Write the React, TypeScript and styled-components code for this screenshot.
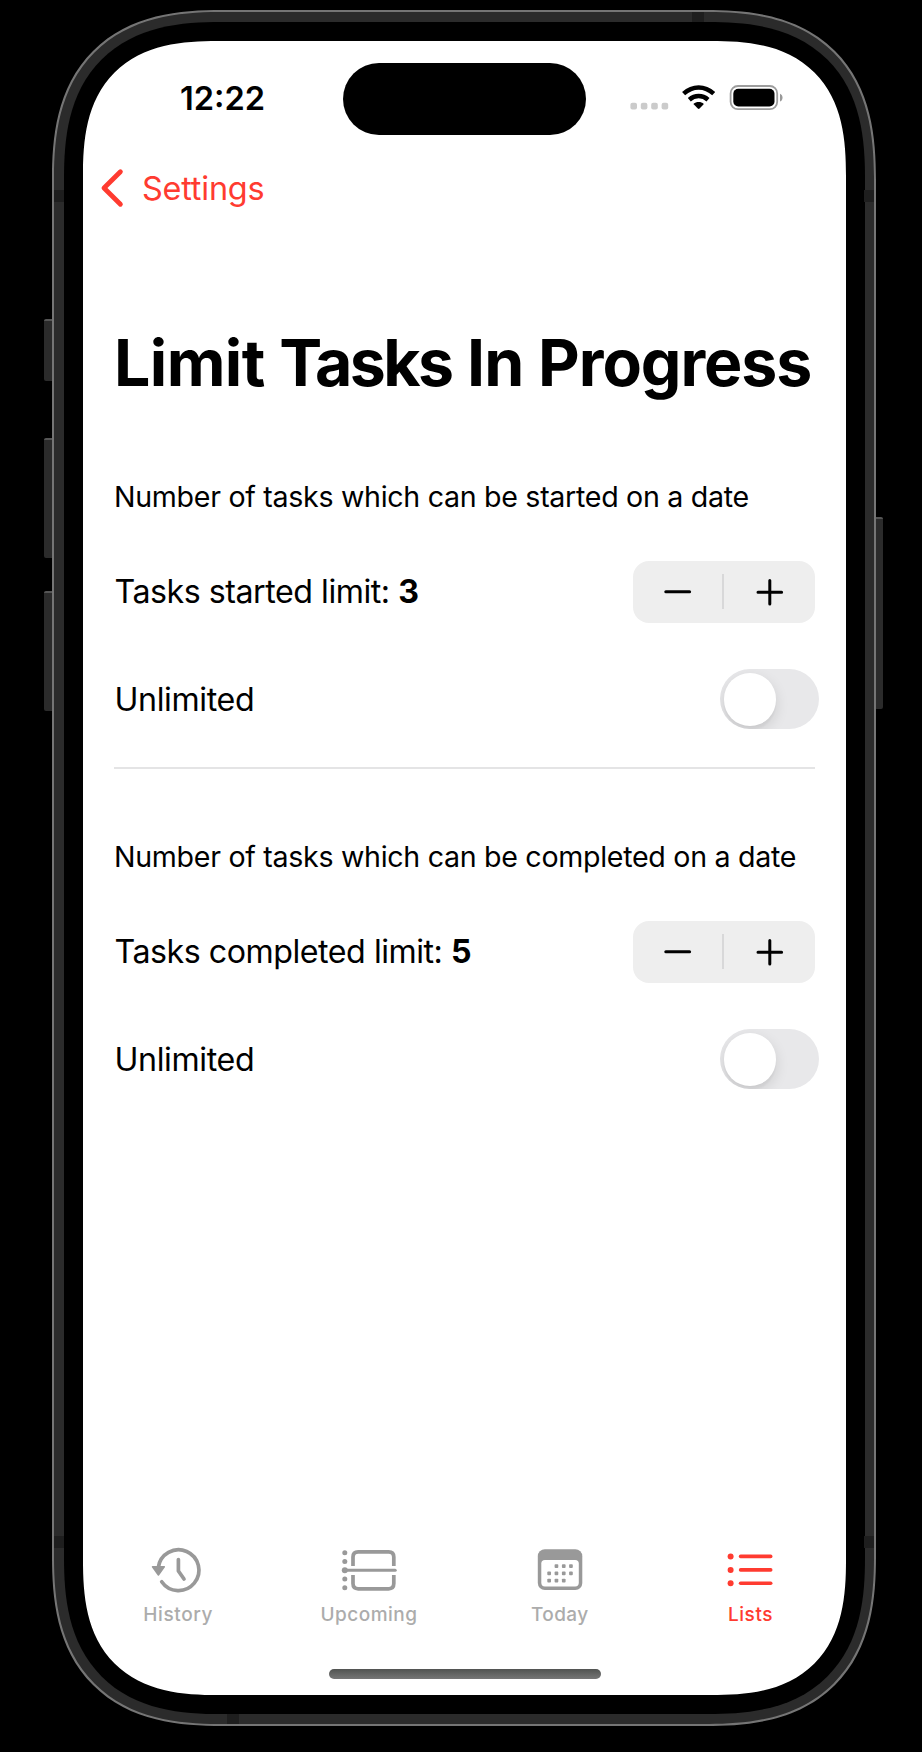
import React from 'react';
import styled, { createGlobalStyle } from 'styled-components';

const Global = createGlobalStyle`
  * { box-sizing: border-box; }
  html, body { margin: 0; background: #000; }
  body { font-family: Inter, 'Liberation Sans', sans-serif; color: #000; font-kerning: normal; }
  button { font: inherit; color: inherit; background: none; border: 0; padding: 0; }
  svg { display: block; flex: none; }
`;

const RED = '#ff3b30';

const Stage = styled.div`
  width: 922px;
  height: 1752px;
  padding: 10px 46px 0 52px;
  background: #000;
  overflow: hidden;
`;

const Frame = styled.div`
  position: relative;
  width: 824px;
  height: 1716px;
  padding: 10px 9.5px;
  background: #2b2b2b;
  border: 2px solid #757575;
  border-radius: 138px;
  @supports (corner-shape: superellipse(1.3)) {
    border-radius: 170px;
    corner-shape: superellipse(1.33);
  }
`;

const Bezel = styled.div`
  width: 100%;
  height: 100%;
  padding: 19px 18.5px 19px 19.5px;
  background: #000;
  border-radius: 126px;
  @supports (corner-shape: superellipse(1.3)) {
    border-radius: 157px;
    corner-shape: superellipse(1.34);
  }
`;

const Screen = styled.main`
  display: flex;
  flex-direction: column;
  width: 763px;
  height: 1654px;
  background: #fff;
  border-radius: 107px;
  overflow: hidden;
  @supports (corner-shape: superellipse(1.3)) {
    border-radius: 135px;
    corner-shape: superellipse(1.38);
  }
`;

const SideKey = styled.i<{ $side: 'left' | 'right'; $top: number; $h: number }>`
  position: absolute;
  ${(p) => (p.$side === 'left' ? 'left: -10px;' : 'right: -9px;')}
  top: ${(p) => p.$top}px;
  width: ${(p) => (p.$side === 'left' ? 8 : 7.5)}px;
  height: ${(p) => p.$h}px;
  background: #2b2b2b;
  border-top: 2px solid #555;
  border-radius: ${(p) => (p.$side === 'left' ? '2px 0 0 2px' : '0 2px 2px 0')};
`;

const Antenna = styled.i<{ $x: number; $y: number; $flat?: boolean }>`
  position: absolute;
  left: ${(p) => p.$x}px;
  top: ${(p) => p.$y}px;
  width: ${(p) => (p.$flat ? 11.5 : 9.5)}px;
  height: ${(p) => (p.$flat ? 10 : 11.5)}px;
  background: #1e1e1e;
`;

const StatusBar = styled.header`
  display: grid;
  grid-template-columns: 260px 243px 260px;
  height: 114px;
  padding-top: 21.5px;
`;

const Clock = styled.time`
  padding: 15.5px 0 0 97px;
  font-size: 32.6px;
  line-height: 40px;
  font-weight: 600;
  letter-spacing: 0;
`;

const Island = styled.div`
  height: 72px;
  background: #000;
  border-radius: 36px;
`;

const Indicators = styled.div`
  display: flex;
  padding: 22px 0 0 44px;
`;

const NavBar = styled.nav`
  display: flex;
  align-items: center;
  gap: 18.5px;
  height: 66px;
  padding-left: 16.5px;
  color: ${RED};
`;

const Back = styled.span`
  padding-top: 1px;
  font-size: 32.4px;
  line-height: 40px;
  letter-spacing: -0.2px;
`;

const Content = styled.section`
  flex: 1;
  padding: 0 31px;
`;

const Title = styled.h1`
  display: flex;
  margin: 102px 0 0;
  height: 81px;
  font-size: 64.4px;
  line-height: 80px;
  font-weight: 700;
  white-space: pre;
`;

const Group = styled.section`
  padding-top: 73px;
  height: 363px;
  & + & { height: 360px; border-top: 2px solid #e4e4e5; padding-top: 68px; }
`;

const Caption = styled.p`
  margin: 0;
  font-size: 28.6px;
  line-height: 40px;
  white-space: nowrap;
`;

const Row = styled.div<{ $h: number; $mt: number }>`
  display: flex;
  align-items: center;
  justify-content: space-between;
  height: ${(p) => p.$h}px;
  margin-top: ${(p) => p.$mt}px;
  font-size: 32.2px;
  line-height: 40px;
  white-space: nowrap;
`;

const Spaced = styled.span<{ $ls: number; $after?: number }>`
  letter-spacing: ${(p) => p.$ls}px;
  margin-right: ${(p) => p.$after ?? 0}px;
  b { font-weight: 700; }
`;

const RowLabel = styled(Spaced)`
  padding: 1.5px 0 0 0.5px;
`;

const StepperBox = styled.div`
  display: flex;
  align-items: center;
  width: 182.3px;
  height: 62px;
  background: #eeeeee;
  border-radius: 16px;
`;

const StepButton = styled.button`
  display: flex;
  align-items: center;
  justify-content: center;
  flex: 1;
  height: 100%;
`;

const StepDivider = styled.i`
  width: 2px;
  height: 35px;
  margin-right: 1px;
  background: #d8d8d9;
`;

const Toggle = styled.button`
  display: flex;
  width: 99px;
  height: 60px;
  margin-right: -4px;
  padding: 3.7px;
  background: #e8e8ea;
  border-radius: 30px;
  overflow: hidden;
`;

const Knob = styled.span`
  width: 52.6px;
  height: 52.6px;
  border-radius: 50%;
  background: #fff;
  box-shadow: 0 5px 14px rgba(0, 0, 0, 0.12), 0 4px 2px rgba(0, 0, 0, 0.03);
`;

const TabBar = styled.nav`
  display: grid;
  grid-template-columns: repeat(4, 190.8px);
  height: 126px;
`;

const Tab = styled.button<{ $active?: boolean; $ls: number }>`
  display: flex;
  flex-direction: column;
  align-items: center;
  height: 90px;
  padding-top: 2px;
  color: ${(p) => (p.$active ? RED : '#999')};
  svg + span {
    margin: 8px 0.5px 0 0;
    font-size: 19px;
    line-height: 24px;
    font-weight: 500;
    letter-spacing: ${(p) => p.$ls}px;
    color: ${(p) => (p.$active ? RED : '#acacac')};
  }
`;

const HomeArea = styled.footer`
  display: flex;
  justify-content: center;
  height: 26px;
`;

const HomeIndicator = styled.div`
  width: 272px;
  height: 10px;
  border-radius: 5px;
  background: linear-gradient(#515351, #767676);
`;

const Status = () => (
  <Indicators>
    <svg width="154" height="26" viewBox="630 85 154 26">
      <g fill="#cbcbcb">
        {[630.4, 640.8, 651.2, 661.6].map((x) => (
          <rect key={x} x={x} y="102.8" width="6.6" height="6.8" rx="2" />
        ))}
      </g>
      <g fill="none" stroke="#000" strokeWidth="4.5">
        <path d="M683.6 93.6C692.6 85.4 704.7 85.4 713.7 93.6" />
        <path d="M689.3 99.7C694.8 94.9 702.5 94.9 708 99.7" />
      </g>
      <path d="M693.4 103.9C696.5 101.3 700.8 101.3 703.9 103.9L699.6 108.5Q698.7 109.3 697.8 108.5Z" fill="#000" />
      <rect x="730.6" y="86" width="46.6" height="23.2" rx="7.4" fill="none" stroke="#9d9d9d" strokeWidth="1.8" />
      <rect x="733.3" y="88.7" width="41.2" height="17.8" rx="5" fill="#000" />
      <path d="M780 93.7C783.4 95 783.4 100.2 780 101.5Z" fill="#999" />
    </svg>
  </Indicators>
);

const Stepper = () => (
  <StepperBox>
    <StepButton aria-label="Decrease">
      <svg width="28" height="28" viewBox="0 0 28 28" stroke="#000" strokeWidth="3" strokeLinecap="round">
        <path d="M1.8 13.8H25.6" />
      </svg>
    </StepButton>
    <StepDivider />
    <StepButton aria-label="Increase">
      <svg width="28" height="28" viewBox="0 0 28 28" stroke="#000" strokeWidth="3" strokeLinecap="round">
        <path d="M2 14.2H25.6M13.8 2.4V26" />
      </svg>
    </StepButton>
  </StepperBox>
);

const HistoryIcon = () => (
  <svg width="54" height="50" viewBox="150.5 1545 54 50">
    <g fill="none" stroke="#999" strokeWidth="3.7" strokeLinecap="round" strokeLinejoin="round">
      <path d="M157.8 1567.5A20.4 20.4 0 1 1 161.2 1581.7" />
      <path d="M177.9 1559.5V1571L183.5 1579" />
    </g>
    <path d="M152 1566.8H163.8L157.9 1575Z" fill="#999" stroke="#999" strokeWidth="1.5" strokeLinejoin="round" />
  </svg>
);

const UpcomingIcon = () => (
  <svg width="56" height="50" viewBox="341 1545 56 50">
    <g fill="#999">
      {[1552.8, 1561.5, 1579, 1587.8].map((y) => (
        <circle key={y} cx="344.8" cy={y} r="2.5" />
      ))}
      <circle cx="344.8" cy="1570.3" r="3" />
    </g>
    <g fill="none" stroke="#999" strokeWidth="3.7">
      <path d="M344.8 1570.3H395.2" strokeWidth="3" strokeLinecap="round" />
      <path d="M353 1566V1557Q353 1551.8 358.2 1551.8H388.6Q393.8 1551.8 393.8 1557V1566" />
      <path d="M353 1575V1583.6Q353 1588.8 358.2 1588.8H388.6Q393.8 1588.8 393.8 1583.6V1575" />
    </g>
  </svg>
);

const calendarDots: [number, number][] = [
  [556.6, 1566], [563.9, 1566], [571.1, 1566],
  [549.3, 1573.3], [556.6, 1573.3], [563.9, 1573.3], [571.1, 1573.3],
  [549.3, 1580.5], [556.6, 1580.5], [563.9, 1580.5],
];

const TodayIcon = () => (
  <svg width="46" height="50" viewBox="537.2 1545 46 50">
    <rect x="538" y="1549.3" width="44.5" height="40.7" rx="7" fill="#999" />
    <rect x="541.5" y="1560" width="37.5" height="26.4" rx="3.6" fill="#fff" />
    <g fill="#999">
      {calendarDots.map(([x, y]) => (
        <rect key={`${x}-${y}`} x={x - 1.8} y={y - 1.8} width="3.7" height="3.7" rx="0.9" />
      ))}
    </g>
  </svg>
);

const ListsIcon = () => (
  <svg width="50" height="50" viewBox="726 1545 50 50">
    {[1556.4, 1569.9, 1583.3].map((y) => (
      <g key={y}>
        <circle cx="730.6" cy={y} r="3" fill={RED} />
        <path d={`M740.6 ${y}H770.7`} stroke={RED} strokeWidth="3.6" strokeLinecap="round" />
      </g>
    ))}
  </svg>
);

type LimitProps = { caption: string; label: string; value: number };

const LimitGroup = ({ caption, label, value }: LimitProps) => (
  <Group>
    <Caption><Spaced $ls={-0.3}>{caption}</Spaced></Caption>
    <Row $h={62} $mt={43.5}>
      <RowLabel $ls={-0.48}>{label} <b>{value}</b></RowLabel>
      <Stepper />
    </Row>
    <Row $h={60} $mt={46.8}>
      <RowLabel $ls={-0.38}>Unlimited</RowLabel>
      <Toggle role="switch" aria-checked={false} aria-label="Unlimited"><Knob /></Toggle>
    </Row>
  </Group>
);

export default function App() {
  return (
    <>
      <Global />
      <Stage>
        <Frame>
          <SideKey $side="left" $top={307} $h={62} />
          <SideKey $side="left" $top={426} $h={120} />
          <SideKey $side="left" $top={579} $h={120} />
          <SideKey $side="right" $top={505} $h={192} />
          <Antenna $x={0} $y={178} />
          <Antenna $x={810.4} $y={178} />
          <Antenna $x={0} $y={1524} />
          <Antenna $x={810.4} $y={1524} />
          <Antenna $x={638} $y={0} $flat />
          <Antenna $x={173} $y={1702} $flat />
          <Bezel>
            <Screen>
              <StatusBar>
                <Clock>12:22</Clock>
                <Island />
                <Status />
              </StatusBar>
              <NavBar>
                <svg width="24" height="40" viewBox="0 0 24 40" fill="none" stroke={RED} strokeWidth="4.8" strokeLinecap="round" strokeLinejoin="round">
                  <path d="M20.4 3.8L4 20L20.4 36.2" />
                </svg>
                <Back>Settings</Back>
              </NavBar>
              <Content>
                <Title>
                  <Spaced $ls={-0.6}>Limit </Spaced>
                  <Spaced $ls={-2.6} $after={3}>Tasks </Spaced>
                  <Spaced $ls={-0.8}>In </Spaced>
                  <Spaced $ls={-1.05}>Progress</Spaced>
                </Title>
                <LimitGroup caption="Number of tasks which can be started on a date" label="Tasks started limit:" value={3} />
                <LimitGroup caption="Number of tasks which can be completed on a date" label="Tasks completed limit:" value={5} />
              </Content>
              <TabBar>
                <Tab $ls={0.6}><HistoryIcon /><span>History</span></Tab>
                <Tab $ls={0.5}><UpcomingIcon /><span>Upcoming</span></Tab>
                <Tab $ls={0.4}><TodayIcon /><span>Today</span></Tab>
                <Tab $ls={0.6} $active><ListsIcon /><span>Lists</span></Tab>
              </TabBar>
              <HomeArea><HomeIndicator /></HomeArea>
            </Screen>
          </Bezel>
        </Frame>
      </Stage>
    </>
  );
}
